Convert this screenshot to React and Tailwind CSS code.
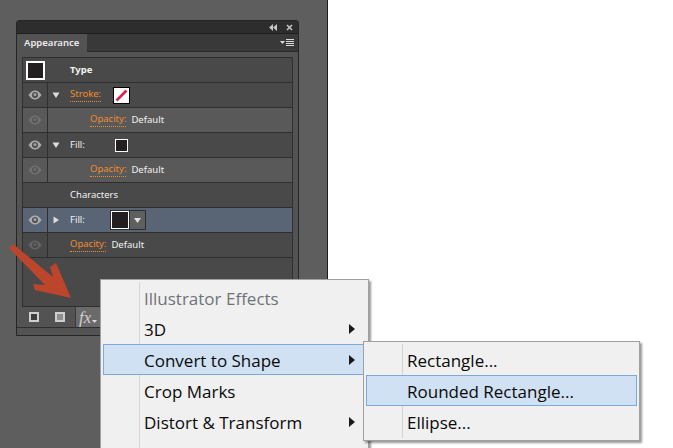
import React from "react";

const uiFont = "font-['Noto_Sans','Liberation_Sans',sans-serif]";
const menuFont = "font-['Open_Sans','Noto_Sans',sans-serif]";

function Eye({ dim }) {
  return (
    <svg width="14" height="10" viewBox="0 0 14 10" className={dim ? "opacity-25" : "opacity-90"}>
      <path d="M0.5 5C3 1.2 5 0.5 7 0.5S11 1.2 13.5 5C11 8.8 9 9.5 7 9.5S3 8.8 0.5 5Z" fill="#b4b4b4" />
      <circle cx="7" cy="5" r="3" fill="#4a4a4a" />
      <circle cx="7" cy="4.6" r="1.6" fill="#a8a8a8" />
    </svg>
  );
}

function Twirl({ open }) {
  return (
    <svg width="8" height="8" viewBox="0 0 8 8">
      {open ? <path d="M0.5 1.5H7.5L4 7Z" fill="#dcdcdc" /> : <path d="M1.5 0.5V7.5L7 4Z" fill="#dcdcdc" />}
    </svg>
  );
}

function Swatch({ size, border, children }) {
  return (
    <div className={`bg-[#231f20] border-white ${size} ${border}`}>{children}</div>
  );
}

function Label({ children }) {
  return (
    <span className="text-[#f08c2c] border-b border-dotted border-[#f08c2c] leading-[12px] pb-px">{children}</span>
  );
}

function Row({ eye, twirl, bg = "bg-[#494949]", children }) {
  return (
    <div className={`flex h-[25px] border-b border-[#2f2f2f] ${bg}`}>
      <div className="w-[25px] flex items-center justify-center border-r border-[#2f2f2f]">
        {eye && <Eye dim={eye === "dim"} />}
      </div>
      <div className="w-[22px] pr-[6px] flex items-center justify-center">
        {twirl && <Twirl open={twirl === "open"} />}
      </div>
      <div className="flex-1 flex items-center">{children}</div>
    </div>
  );
}

function OpacityValue({ indent }) {
  return (
    <div className={`flex items-center gap-[5px] ${indent}`}>
      <Label>Opacity:</Label>
      <span className="text-[#f2f2f2]">Default</span>
    </div>
  );
}

function MenuItem({ label, arrow, active, muted }) {
  return (
    <div
      className={`flex items-center h-[31px] mx-[2px] pl-[40px] pr-[10px] pt-[3px] border ${
        active ? "bg-[#cfe1f2] border-[#7ba9de]" : "border-transparent"
      } ${muted ? "text-[#6f7377]" : "text-[#0a0a0a]"}`}
    >
      <span className="flex-1">{label}</span>
      {arrow && (
        <svg width="6" height="10" viewBox="0 0 6 10" className="mb-[3px]">
          <path d="M0 0L6 5L0 10Z" fill="#1a1a1a" />
        </svg>
      )}
    </div>
  );
}

export default function App() {
  return (
    <div className="relative h-[448px] w-[673px] overflow-hidden bg-white">
      <div className="w-[328px] h-full bg-[#5e5e5e] border-r border-[#1c1c1c] pt-[20px] pl-[16px]">
        <div className={`w-[283px] h-[316px] bg-[#535353] border border-[#262626] rounded-t-[3px] text-[9.5px] ${uiFont}`}>
          <div className="h-[13px] bg-[#2d2d2d] border-b border-[#1f1f1f] flex items-center justify-end gap-[9px] pr-[5px]">
            <svg width="8" height="7" viewBox="0 0 8 7">
              <path d="M4 0V7L0 3.5ZM8 0V7L4 3.5Z" fill="#c4c4c4" />
            </svg>
            <svg width="7" height="7" viewBox="0 0 7 7">
              <path d="M1 1L6 6M6 1L1 6" stroke="#c4c4c4" strokeWidth="1.6" />
            </svg>
          </div>
          <div className="h-[18px] bg-[#393939] border-b border-[#2a2a2a] flex">
            <div className="w-[70px] h-[18px] bg-[#535353] pl-[7px] font-semibold text-[#ececec] leading-[17px]">Appearance</div>
            <div className="flex-1 flex items-center justify-end gap-px pr-[4px]">
              <svg width="5" height="3" viewBox="0 0 5 3">
                <path d="M0 0H5L2.5 3Z" fill="#dcdcdc" />
              </svg>
              <div className="w-[8px] h-[7px] flex flex-col justify-between">
                <div className="h-px bg-[#dcdcdc]" />
                <div className="h-px bg-[#dcdcdc]" />
                <div className="h-px bg-[#dcdcdc]" />
                <div className="h-px bg-[#dcdcdc]" />
              </div>
            </div>
          </div>

          <div className="mx-[5px] mt-[5px] h-[250px] border border-[#2f2f2f] bg-[#494949] text-[#f2f2f2]">
            <div className="flex items-center h-[25px] border-b border-[#2f2f2f]">
              <div className="w-[47px] pl-[3px]">
                <Swatch size="w-[19px] h-[19px]" border="border-2" />
              </div>
              <span className="font-bold">Type</span>
            </div>
            <Row eye="on" twirl="open">
              <Label>Stroke:</Label>
              <div className="ml-[12px] w-[17px] h-[17px] bg-white border border-black flex items-center justify-center">
                <svg width="13" height="13" viewBox="0 0 13 13">
                  <path d="M1.5 11.5L11.5 1.5" stroke="#d6264f" strokeWidth="2.6" />
                </svg>
              </div>
            </Row>
            <Row eye="dim" bg="bg-[#595959]">
              <OpacityValue indent="ml-[20px]" />
            </Row>
            <Row eye="on" twirl="open">
              <span>Fill:</span>
              <div className="ml-[30px]">
                <Swatch size="w-[13px] h-[13px]" border="border" />
              </div>
            </Row>
            <Row eye="dim" bg="bg-[#595959]">
              <OpacityValue indent="ml-[20px]" />
            </Row>
            <div className="h-[25px] border-b border-[#2f2f2f] pl-[47px] flex items-center">Characters</div>
            <Row eye="on" twirl="closed" bg="bg-[#596475]">
              <span>Fill:</span>
              <div className="ml-[25px] flex items-center bg-[#2e2e2e] p-px">
                <Swatch size="w-[18px] h-[18px]" border="border" />
                <div className="w-[15px] h-[18px] ml-px bg-[#5f5f5f] flex items-center justify-center">
                  <svg width="7" height="5" viewBox="0 0 7 5">
                    <path d="M0 0H7L3.5 5Z" fill="#e0e0e0" />
                  </svg>
                </div>
              </div>
            </Row>
            <Row eye="dim">
              <OpacityValue />
            </Row>
          </div>

          <div className="h-[20px] ml-[6px] flex items-center">
            <div className="w-[22px] flex justify-center">
              <div className="w-[10px] h-[10px] border-2 border-[#cfcfcf] bg-[#3c3c3c]" />
            </div>
            <div className="w-[26px] ml-[2px] flex justify-center">
              <div className="w-[10px] h-[10px] border-2 border-[#cfcfcf] bg-[#8e8e8e]" />
            </div>
            <div className="w-[25px] h-[20px] ml-[2px] pl-[3px] pt-[1px] bg-[#6a6a6a] border-l border-[#3a3a3a] flex items-center text-[#cfcfcf] font-['Liberation_Serif',serif] italic text-[17px] leading-none">
              <span>fx</span>
              <svg width="5" height="3" viewBox="0 0 5 3" className="ml-px mt-[8px]">
                <path d="M0 0H5L2.5 3Z" fill="#dcdcdc" />
              </svg>
            </div>
          </div>
          <div className="h-[8px] border-t border-[#2f2f2f]" />
        </div>
      </div>

      {/* red arrow pointing at the fx button */}
      <svg className="absolute left-0 top-[235px]" width="80" height="70" viewBox="0 0 80 70">
        <path d="M13 9L53 42L50 32L56 28L71 63L35 55L33 49L45 50L9 13Z" fill="#bd452c" />
      </svg>

      <div className={`absolute left-[100px] top-[279px] w-[269px] h-[200px] bg-[#f0f0f0] border border-[#a0a0a0] shadow-[2px_2px_2px_rgba(0,0,0,0.4)] pt-[2px] text-[17px] ${menuFont}`}>
        <div className="absolute left-[38px] top-[2px] bottom-0 w-px bg-[#d4d4d4]" />
        <div className="relative">
          <MenuItem label="Illustrator Effects" muted />
          <MenuItem label="3D" arrow />
          <MenuItem label="Convert to Shape" arrow active />
          <MenuItem label="Crop Marks" />
          <MenuItem label="Distort & Transform" arrow />
          <MenuItem label="Path" arrow />
        </div>
      </div>

      <div className={`absolute left-[363px] top-[341px] w-[277px] h-[100px] bg-[#f0f0f0] border border-[#a0a0a0] shadow-[2px_2px_2px_rgba(0,0,0,0.4)] pt-[2px] text-[17px] ${menuFont}`}>
        <div className="absolute left-[38px] top-[2px] bottom-[2px] w-px bg-[#d4d4d4]" />
        <div className="relative">
          <MenuItem label="Rectangle..." />
          <MenuItem label="Rounded Rectangle..." active />
          <MenuItem label="Ellipse..." />
        </div>
      </div>
    </div>
  );
}
